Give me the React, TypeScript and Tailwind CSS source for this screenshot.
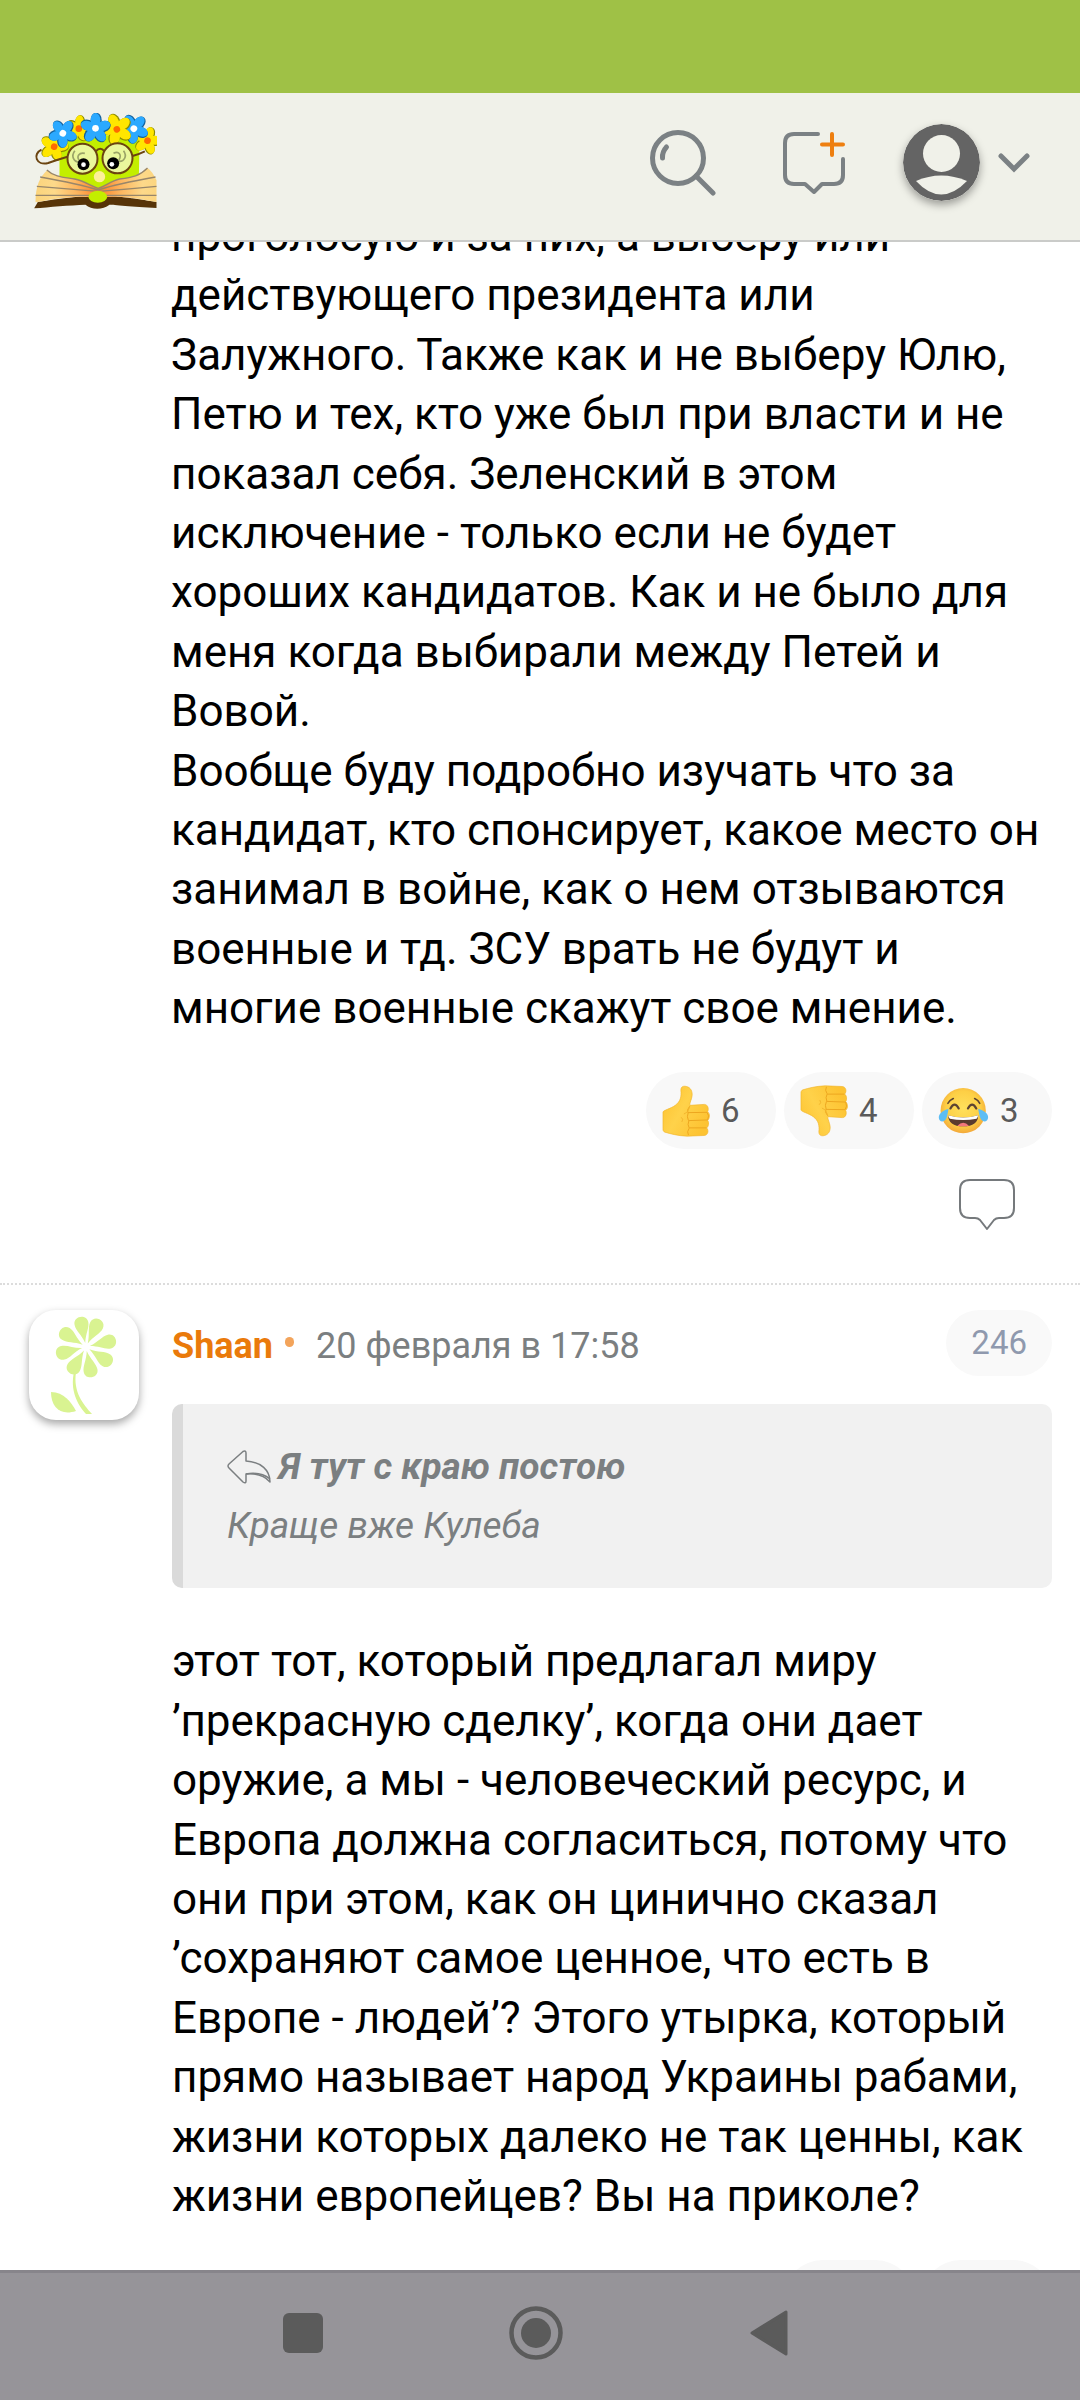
import React from "react";

const OWL_FLOWERS = [
  { x: 164, y: 200, fill: "#ffe600", edge: "#8c8a00", eye: "#ff6a00", s: 30, r: 15 },
  { x: 238, y: 146, fill: "#ffe600", edge: "#8c8a00", eye: "#ff6a00", s: 28, r: 5 },
  { x: 444, y: 182, fill: "#ffe600", edge: "#8c8a00", eye: "#ff6a00", s: 29, r: 15 },
  { x: 190, y: 160, fill: "#2ba9ff", edge: "#14609c", eye: "#ffffff", s: 30, r: 35 },
  { x: 403, y: 146, fill: "#2ba9ff", edge: "#14609c", eye: "#ffffff", s: 31, r: 40 },
  { x: 352, y: 148, fill: "#ffe600", edge: "#8c8a00", eye: "#ff6a00", s: 33, r: -22 },
  { x: 288, y: 145, fill: "#2ba9ff", edge: "#14609c", eye: "#ffffff", s: 32, r: 0 },
];

function Logo() {
  return (
    <svg viewBox="104 99 368 288" className="h-24 w-[123px]" aria-hidden="true">
      <defs>
        <radialGradient id="pages" cx="297" cy="320" r="190" gradientUnits="userSpaceOnUse">
          <stop offset="0" stopColor="#fb7d22" />
          <stop offset="0.35" stopColor="#fdb55e" />
          <stop offset="0.7" stopColor="#fdd98a" />
          <stop offset="1" stopColor="#fbd47c" />
        </radialGradient>
      </defs>
      <path d="M180 180Q300 150 420 180L418 300L296 330L180 300Z" fill="#c3ee00" />
      <path d="M115 366C240 346 262 348 296 356C330 346 350 346 471 366V384C400 380 340 374 330 374C310 390 276 390 258 374C210 376 150 381 104 385Z" fill="#573408" />
      <path d="M144 270C165 292 195 292 225 297C255 303 275 318 296 325C317 318 335 303 360 297C400 292 420 288 444 264C460 276 466 292 471 300V366C400 352 340 344 296 356C250 344 190 352 108 367C108 320 120 290 144 270Z" fill="url(#pages)" />
      <g fill="none" stroke="#98866a" strokeWidth="4">
        <path d="M142 270C165 292 195 292 225 297C255 303 275 318 296 325C317 318 335 303 360 297C400 292 420 288 444 264" />
        <path d="M122 291C190 303 240 312 296 330C350 312 400 303 468 291" />
        <path d="M112 319C180 325 240 330 296 334C350 330 410 325 471 319" />
        <path d="M108 346H471" />
      </g>
      <ellipse cx="295" cy="350" rx="28" ry="18" fill="#c3ee00" />
      {OWL_FLOWERS.map((f) => (
        <g key={f.x} transform={`translate(${f.x} ${f.y}) rotate(${f.r})`}>
          {[0, 72, 144, 216, 288].map((a) => (
            <ellipse key={`e${a}`} cx="2" cy={-f.s * 0.8 + 1} rx={f.s * 0.52} ry={f.s * 0.7} fill={f.edge} transform={`rotate(${a})`} />
          ))}
          {[0, 72, 144, 216, 288].map((a) => (
            <ellipse key={a} cx="0" cy={-f.s * 0.76} rx={f.s * 0.46} ry={f.s * 0.67} fill={f.fill} transform={`rotate(${a})`} />
          ))}
          <circle r="12" fill={f.fill} />
          <circle r="10" fill={f.eye} />
        </g>
      ))}
      <g fill="#eaf79c" stroke="#6b4410" strokeWidth="6">
        <circle cx="249" cy="236" r="45" />
        <circle cx="354" cy="235" r="45" />
      </g>
      <g fill="none" stroke="#6b4410" strokeWidth="6">
        <path d="M289 214Q302 198 315 214M204 230Q170 240 146 249C110 258 98 222 126 209M399 228Q420 222 436 214" />
      </g>
      <g fill="none" stroke="#9ba467" strokeWidth="5">
        <path d="M226 212C214 228 222 246 240 246M256 220C238 216 230 230 240 242M372 212C384 228 374 246 358 244M342 220C358 212 368 224 358 240" />
      </g>
      <circle cx="252" cy="253" r="18" fill="#000" />
      <circle cx="341" cy="250" r="18" fill="#000" />
      <circle cx="252" cy="254" r="7" fill="#fff" />
      <circle cx="337" cy="253" r="7" fill="#fff" />
      <circle cx="300" cy="290" r="17" fill="#fdf09a" />
    </svg>
  );
}

function SearchIcon() {
  return (
    <svg viewBox="0 0 66 66" className="size-[66px]" fill="none" stroke="#7b8184" strokeLinecap="round" aria-hidden="true">
      <circle cx="28" cy="28" r="25.500" strokeWidth="5" />
      <path d="M46 46L63 63" strokeWidth="5" />
      <path d="M16.500 17Q12 22 12.500 28" strokeWidth="5" />
    </svg>
  );
}

function NewTopicIcon() {
  return (
    <svg viewBox="0 0 62 62" className="size-[62px]" fill="none" strokeWidth="4" strokeLinecap="round" strokeLinejoin="round" aria-hidden="true">
      <path d="M35 2H11Q2 2 2 11V43Q2 52 11 52H22L31 60L39 52H51Q60 52 60 43V27" stroke="#7b8184" />
      <path d="M49 2V23M39 12.500H60" stroke="#ee7f10" />
    </svg>
  );
}

function UserIcon() {
  return (
    <svg viewBox="0 0 77 77" className="size-[77px] rounded-full shadow-[0_4px_8px_rgba(0,0,0,0.35)]" aria-hidden="true">
      <circle cx="38.500" cy="38.500" r="38.500" fill="#646464" />
      <circle cx="38.500" cy="29.500" r="18.500" fill="#f0f1e9" />
      <path d="M13 57Q38 46 64 57Q38 84 13 57Z" fill="#f0f1e9" />
    </svg>
  );
}

function ThumbIcon({ down = false }: { down?: boolean }) {
  const id = down ? "thumb-down" : "thumb-up";
  return (
    <svg viewBox="124 103 145 156" className={down ? "h-[52px] w-12 -scale-y-100" : "h-[52px] w-12"} aria-hidden="true">
      <defs>
        <linearGradient id={id} x1="0" y1="0" x2="1" y2="0.6">
          <stop offset="0" stopColor="#fdc02c" />
          <stop offset="0.5" stopColor="#ffd24a" />
          <stop offset="1" stopColor="#fdc332" />
        </linearGradient>
      </defs>
      <path
        d="M127 184C128 179 150 174 164 164C180 152 183 138 181 118C181 106 190 105 198 107C211 110 216 122 215 134C214 146 207 156 208 164L252 161C263 161 266 175 262 183C270 190 268 204 262 209C267 216 265 228 259 232C266 240 263 254 252 255L200 257C172 256 150 250 133 245C128 243 127 240 127 235Z"
        fill={`url(#${id})`}
        stroke="#f2b42c"
        strokeWidth="2"
      />
      <path d="M208 166Q198 178 202 186L260 185Q268 195 262 208L204 210Q198 198 203 187M205 211Q200 222 206 232L258 232M206 233Q198 244 204 254" fill="none" stroke="#eda61f" strokeWidth="3" />
      <path d="M208 166Q203 186 190 190M182 200Q190 205 184 214" fill="none" stroke="#f2b42c" strokeWidth="3" />
    </svg>
  );
}

function LaughIcon() {
  return (
    <svg viewBox="949 105 160 150" className="h-12 w-[51px]" aria-hidden="true">
      <defs>
        <radialGradient id="face" cx="0.5" cy="0.45" r="0.55">
          <stop offset="0" stopColor="#ffe05c" />
          <stop offset="0.7" stopColor="#fdcf45" />
          <stop offset="1" stopColor="#f3a83a" />
        </radialGradient>
      </defs>
      <circle cx="1028" cy="179" r="71" fill="url(#face)" />
      <g fill="none" stroke="#5d4432" strokeWidth="5" strokeLinecap="round">
        <path d="M980 156Q986 146 997 141M1064 141Q1075 146 1080 156" />
        <path d="M988 172Q1001 148 1014 172M1043 172Q1056 148 1069 172" strokeWidth="7" />
      </g>
      <path d="M981 193Q1028 208 1075 193Q1075 228 1028 228Q981 228 981 193Z" fill="#5a3b2e" />
      <path d="M981 193Q1028 208 1075 193Q1074 201 1070 204Q1028 213 986 204Q982 201 981 193Z" fill="#fff" />
      <path d="M1010 226Q1028 208 1046 226Q1028 230 1010 226Z" fill="#f4777c" />
      <path d="M982 174C978 196 976 212 963 213C950 213 948 196 957 187C963 180 973 176 982 174Z" fill="#5dbdf4" />
      <path d="M1075 174C1079 196 1082 212 1094 213C1107 213 1110 196 1101 187C1094 180 1084 176 1075 174Z" fill="#5dbdf4" />
    </svg>
  );
}

function FlowerAvatar() {
  const petals = [-11, 26, 77, 123, 169, 211, 256, 303];
  return (
    <span className="block size-[110px] overflow-hidden rounded-[27px] bg-white shadow-[0_4px_9px_rgba(0,0,0,0.35)]">
      <svg viewBox="0 0 110 110" className="size-[110px]" fill="#d9f391" aria-hidden="true">
        {petals.map((a) => (
          <path key={a} d="M0 -4C-2 -13 -7 -18 -7 -24C-7 -33 7 -33 7 -24C7 -18 2 -13 0 -4Z" transform={`translate(57 37) rotate(${a})`} />
        ))}
        <path d="M45 62C41 80 48 94 57 104H63C54 94 44 82 47 62Z" />
        <path d="M22 82C35 82 42 92 47 101C32 106 22 98 22 82Z" />
      </svg>
    </span>
  );
}

function ReplyBubbleIcon() {
  return (
    <svg viewBox="0 0 56 52" className="h-[52px] w-14" fill="none" stroke="#75797c" strokeWidth="2" strokeLinejoin="round" aria-hidden="true">
      <path d="M11 1H45Q55 1 55 11V29Q55 39 45 39H40Q37 39 35 41L28 50L21 41Q19 39 16 39H11Q1 39 1 29V11Q1 1 11 1Z" />
    </svg>
  );
}

function QuoteArrowIcon() {
  return (
    <svg viewBox="0 0 44 34" className="h-[34px] w-11" fill="none" stroke="#7b7f81" strokeWidth="1.500" strokeLinejoin="round" aria-hidden="true">
      <path d="M1 16Q1 15 2 14L16 1.500Q19 0 19 3V11C34 12 43 20 43 32C37 25 30 23 19 24V31Q19 34 16 32L2 18Q1 17 1 16Z" />
      <path d="M19 24C30 22 38 25 43 29" />
    </svg>
  );
}

function Reaction({ label, count, children }: { label: string; count?: number; children?: React.ReactNode }) {
  return (
    <button type="button" aria-label={label} className="flex h-[77px] w-[130px] items-center gap-[11px] rounded-full bg-[#f8f8f8] pl-4 text-[33px] leading-10 text-[#5a5a5a]">
      {children}
      {count !== undefined && <span>{count}</span>}
    </button>
  );
}

export default function App() {
  return (
    <div className="flex h-screen flex-col overflow-hidden bg-white font-['Roboto',sans-serif] text-black">
      <div className="h-[93px] shrink-0 bg-[#9fc146]" />
      <header className="flex h-[149px] shrink-0 items-center border-b-2 border-[#cacbc9] bg-[#f0f1e9] pr-[50px] pb-2 pl-[34px]">
        <a href="#home" aria-label="Главная" className="pb-1">
          <Logo />
        </a>
        <div className="ml-auto flex items-center">
          <button type="button" aria-label="Поиск" className="mr-[67px]">
            <SearchIcon />
          </button>
          <button type="button" aria-label="Новая тема" className="mr-[58px]">
            <NewTopicIcon />
          </button>
          <button type="button" aria-label="Профиль" className="flex items-center gap-[18px]">
            <UserIcon />
            <svg viewBox="0 0 32 20" className="h-5 w-8" fill="none" stroke="#7b8184" strokeWidth="5" strokeLinecap="round" aria-hidden="true">
              <path d="M3 3L16 16L29 3" />
            </svg>
          </button>
        </div>
      </header>

      <main className="min-h-0 flex-1 overflow-hidden">
        <article className="-mt-[35px] border-b-2 border-dotted border-[#dcdcdc] pr-7 pb-[52px] pl-[171px]">
          <div className="text-[44px] leading-[1.35]">
            <p>
              проголосую и за них, а выберу или действующего президента или Залужного. Также как и не выберу Юлю, Петю и тех, кто уже был при власти и не показал себя. Зеленский в этом исключение - только если не будет хороших кандидатов. Как и не было для меня когда выбирали между Петей и Вовой.
            </p>
            <p>
              Вообще буду подробно изучать что за кандидат, кто спонсирует, какое место он занимал в войне, как о нем отзываются военные и тд. ЗСУ врать не будут и многие военные скажут свое мнение.
            </p>
          </div>
          <div className="mt-[34px] flex justify-end gap-2">
            <Reaction label="Нравится" count={6}>
              <ThumbIcon />
            </Reaction>
            <Reaction label="Не нравится" count={4}>
              <ThumbIcon down />
            </Reaction>
            <Reaction label="Смешно" count={3}>
              <LaughIcon />
            </Reaction>
          </div>
          <div className="mt-[30px] flex justify-end pr-[37px]">
            <button type="button" aria-label="Ответить">
              <ReplyBubbleIcon />
            </button>
          </div>
        </article>

        <article className="flex gap-[33px] pt-[25px] pr-7 pl-[29px]">
          <a href="#shaan" aria-label="Shaan" className="shrink-0">
            <FlowerAvatar />
          </a>
          <div className="min-w-0 flex-1">
            <div className="flex items-center">
              <div className="flex items-center pt-1.5 text-[36px] leading-[42px]">
                <a href="#shaan" className="font-bold text-[#ea7a0b]">
                  Shaan
                </a>
                <span className="mb-2 ml-3 h-2.5 w-[9px] rounded-full bg-[#f3a45b]" />
                <time className="ml-[22px] text-[#7b7f81]">20 февраля в 17:58</time>
              </div>
              <a href="#246" className="ml-auto flex h-[66px] items-center rounded-full bg-[#f9f9f9] px-[25px] text-[33px] leading-10 text-[#8f99ae]">
                246
              </a>
            </div>
            <blockquote className="mt-7 rounded-[10px] border-l-[11px] border-[#dadada] bg-[#f1f1f1] py-[33px] pl-11 text-[37px] leading-[59px] text-[#7b7f81] italic">
              <div className="flex items-center gap-2">
                <QuoteArrowIcon />
                <strong className="font-bold">Я тут с краю постою</strong>
              </div>
              <p>Краще вже Кулеба</p>
            </blockquote>
            <p className="mt-11 text-[44px] leading-[1.35]">
              этот тот, который предлагал миру ’прекрасную сделку’, когда они дает оружие, а мы - человеческий ресурс, и Европа должна согласиться, потому что они при этом, как он цинично сказал ’сохраняют самое ценное, что есть в Европе - людей’? Этого утырка, который прямо называет народ Украины рабами, жизни которых далеко не так ценны, как жизни европейцев? Вы на приколе?
            </p>
            <div className="mt-[34px] flex justify-end gap-2">
              <Reaction label="Нравится" />
              <Reaction label="Не нравится" />
            </div>
          </div>
        </article>
      </main>

      <nav className="flex h-[130px] shrink-0 items-center justify-center gap-[179px] border-t-[3px] border-[#87858b] bg-[#969499] pr-2 pb-2">
        <button type="button" aria-label="Недавние" className="flex w-[54px] justify-center">
          <span className="size-10 rounded-md bg-[#5b5b5b]" />
        </button>
        <button type="button" aria-label="Домой">
          <svg viewBox="0 0 54 54" className="size-[54px]" aria-hidden="true">
            <circle cx="27" cy="27" r="24.500" fill="none" stroke="#5b5b5b" strokeWidth="4.500" />
            <circle cx="27" cy="27" r="15" fill="#5b5b5b" />
          </svg>
        </button>
        <button type="button" aria-label="Назад" className="flex w-[54px] justify-center">
          <svg viewBox="0 0 38 46" className="h-[46px] w-[38px]" fill="#5b5b5b" stroke="#5b5b5b" strokeWidth="3" strokeLinejoin="round" aria-hidden="true">
            <path d="M2 23L36 2V44Z" />
          </svg>
        </button>
      </nav>
    </div>
  );
}
